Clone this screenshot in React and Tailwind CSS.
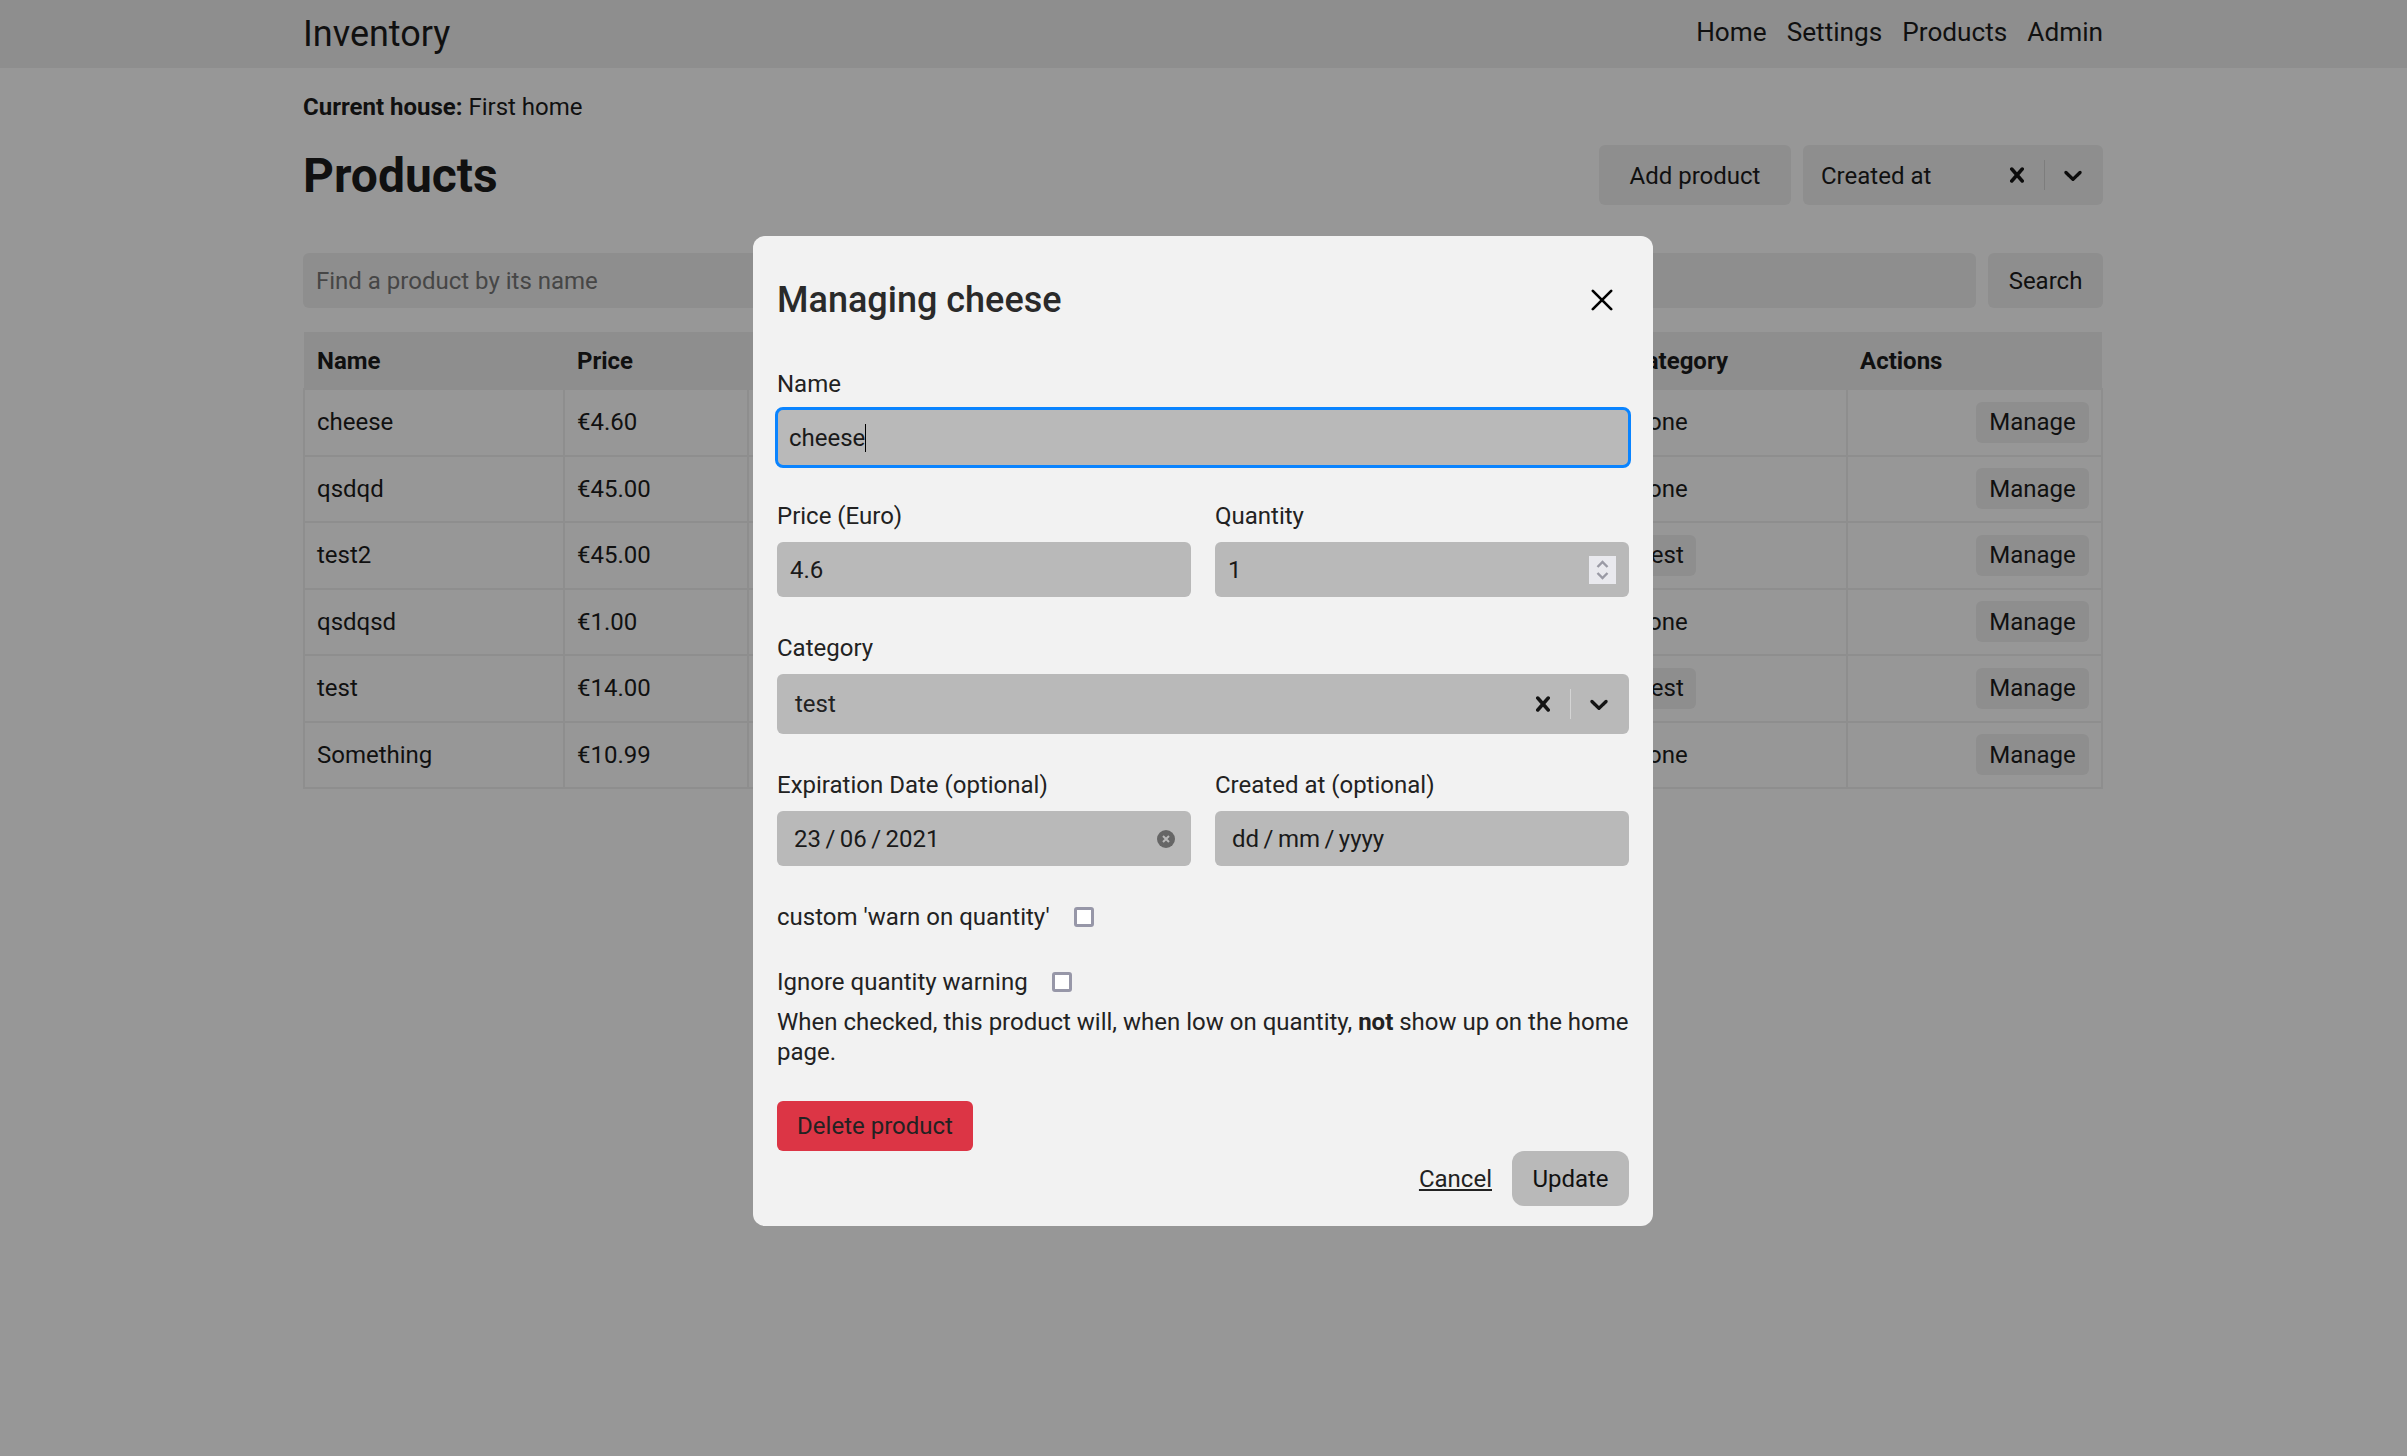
import React from "react";

const CROSS = "M14.348 14.849c-0.469 0.469-1.229 0.469-1.697 0l-2.651-3.030-2.651 3.029c-0.469 0.469-1.229 0.469-1.697 0-0.469-0.469-0.469-1.229 0-1.697l2.758-3.15-2.759-3.152c-0.469-0.469-0.469-1.228 0-1.697s1.228-0.469 1.697 0l2.652 3.031 2.651-3.031c0.469-0.469 1.228-0.469 1.697 0s0.469 1.229 0 1.697l-2.758 3.152 2.758 3.15c0.469 0.469 0.469 1.229 0 1.698z";
const CHEVRON = "M4.516 7.548c0.436-0.446 1.043-0.481 1.576 0l3.908 3.747 3.908-3.747c0.533-0.481 1.141-0.446 1.574 0 0.436 0.445 0.408 1.197 0 1.615-0.406 0.418-4.695 4.502-4.695 4.502-0.217 0.223-0.502 0.335-0.787 0.335s-0.57-0.112-0.789-0.335c0 0-4.287-4.084-4.695-4.502s-0.436-1.17 0-1.615z";

function Icon({ d }) {
  return (
    <svg viewBox="0 0 20 20" className="w-[30px] h-[30px] fill-current text-[#141414]">
      <path d={d} />
    </svg>
  );
}

function SelectControls({ sep }) {
  return (
    <div className="flex items-center">
      <span className="flex w-[54px] justify-center"><Icon d={CROSS} /></span>
      <span className={`w-[1px] h-[30px] ${sep}`} />
      <span className="flex w-[58px] pr-[2px] justify-center"><Icon d={CHEVRON} /></span>
    </div>
  );
}

const rows = [
  ["cheese", "€4.60", "1", "None"],
  ["qsdqd", "€45.00", "4", "None"],
  ["test2", "€45.00", "8", "test"],
  ["qsdqsd", "€1.00", "3", "None"],
  ["test", "€14.00", "2", "test"],
  ["Something", "€10.99", "1", "None"],
];

function Field({ label, children, className = "" }) {
  return (
    <div className={`flex flex-col ${className}`}>
      <label className="h-[29px] mb-[11px] leading-[29px]">{label}</label>
      {children}
    </div>
  );
}

const inputBox = "h-[55px] w-full rounded-[6px] bg-[#b9b9b9] flex items-center";
const td = "border-2 border-[#ededed]";

export default function App() {
  return (
    <div className="relative min-h-[1456px] bg-[#fcfcfc] text-[24px] leading-[36px] text-[#1c1c1c] font-['Roboto',sans-serif]">
      <nav className="h-[68px] bg-[#ededed] pl-[303px]">
        <div className="w-[1800px] h-full flex items-center justify-between">
          <span className="text-[36px]">Inventory</span>
          <div className="flex gap-[20px] text-[26.2px] pb-[4px]">
            <span>Home</span><span>Settings</span><span>Products</span><span>Admin</span>
          </div>
        </div>
      </nav>
      <main className="w-[1800px] ml-[303px]">
        <p className="mt-[21px] h-[36px]"><b className="font-bold">Current house:</b> First home</p>
        <div className="mt-[20px] flex items-center justify-between h-[60px]">
          <h1 className="text-[48px] font-bold pt-[1px]">Products</h1>
          <div className="flex gap-[12px]">
            <button className="h-[60px] w-[192px] rounded-[6px] bg-[#ededed] pt-[1px]">Add product</button>
            <div className="h-[60px] w-[300px] rounded-[6px] bg-[#ededed] flex items-center justify-between pl-[18px]">
              <span className="pt-[1px]">Created at</span>
              <SelectControls sep="bg-[#d0d0d0]" />
            </div>
          </div>
        </div>
        <div className="mt-[48px] flex gap-[12px] h-[55px]">
          <div className="flex-1 rounded-[6px] bg-[#ededed] flex items-center pl-[13px] text-[#757575]">Find a product by its name</div>
          <button className="w-[115px] rounded-[6px] bg-[#ededed]">Search</button>
        </div>
        <table className="mt-[24px] w-[1800px] table-fixed border-collapse">
          <thead>
            <tr className="bg-[#ededed] h-[57px] font-bold text-left">
              <th className="w-[260px] pl-[13px] pt-[2px]">Name</th>
              <th className="w-[184px] pl-[13px] pt-[2px]">Price</th>
              <th className="w-[869px] pl-[13px] pt-[2px]">Quantity</th>
              <th className="w-[230px] pl-[13px] pt-[2px]">Category</th>
              <th className="pl-[13px] pt-[2px]">Actions</th>
            </tr>
          </thead>
          <tbody>
            {rows.map((r) => (
              <tr key={r[0]} className="h-[66.5px]">
                <td className={`pl-[12px] ${td}`}>{r[0]}</td>
                <td className={`pl-[12px] ${td}`}>{r[1]}</td>
                <td className={`pl-[12px] ${td}`}>{r[2]}</td>
                <td className={`pl-[13px] ${td}`}>
                  {r[3] === "test" ? (
                    <span className="inline-block rounded-[6px] bg-[#ededed] px-[12px] h-[41px] leading-[41px]">test</span>
                  ) : r[3]}
                </td>
                <td className={`pr-[12px] text-right ${td}`}>
                  <button className="h-[41px] w-[113px] rounded-[6px] bg-[#ededed]">Manage</button>
                </td>
              </tr>
            ))}
          </tbody>
        </table>
      </main>

      <div className="absolute inset-0 bg-black/40 pt-[236px] pl-[753px]">
        <div className="w-[900px] h-[990px] rounded-[12px] bg-[#f2f2f2] px-[24px] text-[#222222] flex flex-col">
          <div className="mt-[40px] h-[48px] flex items-center justify-between">
            <h2 className="text-[36px] font-medium text-[#2a2a2a]">Managing cheese</h2>
            <svg viewBox="0 0 24 24" className="w-[22px] h-[22px] mr-[16px] stroke-black fill-none" strokeWidth="2.9" strokeLinecap="round">
              <path d="M2 2 L22 22 M22 2 L2 22" />
            </svg>
          </div>
          <div className="mt-[46px]">
            <Field label="Name">
              <div className="h-[61px] -mx-[2px] -mt-[3px] rounded-[8px] border-[3px] border-[#0a84ff] bg-[#b9b9b9] flex items-center pl-[11px] text-[#1a1a1a]">
                <span>cheese</span><span className="w-[1px] h-[28px] bg-black" />
              </div>
            </Field>
          </div>
          <div className="mt-[34px] grid grid-cols-2 gap-x-[24px] text-[#222222]">
            <Field label="Price (Euro)">
              <div className={`${inputBox} pl-[13px] text-[#1a1a1a]`}>4.6</div>
            </Field>
            <Field label="Quantity">
              <div className={`${inputBox} pl-[13px] justify-between pr-[13px] text-[#1a1a1a]`}>
                <span>1</span>
                <span className="w-[27px] h-[28px] bg-[#e9e9ee] flex items-center justify-center">
                  <svg viewBox="0 0 27 28" className="w-[27px] h-[28px] stroke-[#9a9aa5] fill-none" strokeWidth="2.4">
                    <path d="M8.5 11 L13.5 6 L18.5 11 M8.5 17 L13.5 22 L18.5 17" />
                  </svg>
                </span>
              </div>
            </Field>
          </div>
          <div className="mt-[37px]">
            <Field label="Category">
              <div className="h-[60px] rounded-[6px] bg-[#b9b9b9] flex items-center justify-between pl-[18px]">
                <span>test</span>
                <SelectControls sep="bg-[#d4d4d4]" />
              </div>
            </Field>
          </div>
          <div className="mt-[37px] grid grid-cols-2 gap-x-[24px]">
            <Field label="Expiration Date (optional)">
              <div className={`${inputBox} pl-[17px] justify-between pr-[16px] text-[#1a1a1a] [word-spacing:-1.5px]`}>
                <span>23 / 06 / 2021</span>
                <svg viewBox="0 0 18 18" className="w-[18px] h-[18px]">
                  <circle cx="9" cy="9" r="9" fill="#666666" />
                  <path d="M6 6 L12 12 M12 6 L6 12" stroke="#b9b9b9" strokeWidth="2" />
                </svg>
              </div>
            </Field>
            <Field label="Created at (optional)">
              <div className={`${inputBox} pl-[17px] text-[#1a1a1a] [word-spacing:-1.5px]`}>dd / mm / yyyy</div>
            </Field>
          </div>
          <div className="mt-[36px] h-[29px] flex items-center gap-[24px]">
            <span>custom 'warn on quantity'</span>
            <span className="w-[20px] h-[20px] rounded-[3px] border-[3px] border-[#9797a8] bg-white" />
          </div>
          <div className="mt-[36px] h-[29px] flex items-center gap-[24px]">
            <span>Ignore quantity warning</span>
            <span className="w-[20px] h-[20px] rounded-[3px] border-[3px] border-[#9797a8] bg-white" />
          </div>
          <p className="mt-[12px] leading-[29.5px]">When checked, this product will, when low on quantity, <b className="font-bold">not</b> show up on the home page.</p>
          <div className="mt-[34px]">
            <button className="h-[50px] w-[196px] rounded-[6px] bg-[#dc3545]">Delete product</button>
          </div>
          <div className="flex items-center justify-end gap-[20px]">
            <span className="underline">Cancel</span>
            <button className="h-[55px] w-[117px] rounded-[12px] bg-[#b9b9b9] text-[#111111]">Update</button>
          </div>
        </div>
      </div>
    </div>
  );
}
